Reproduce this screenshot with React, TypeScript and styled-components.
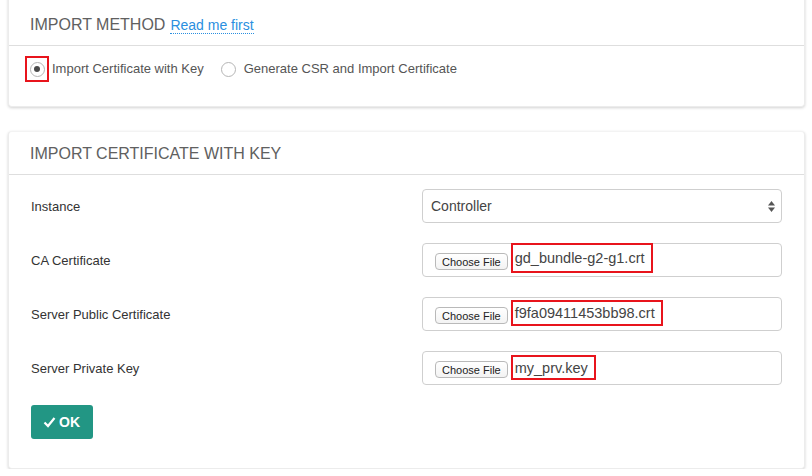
import React from "react";
import styled, { createGlobalStyle } from "styled-components";

const Global = createGlobalStyle`
  html, body { margin: 0; padding: 0; background: #fff; }
  body { font-family: "Liberation Sans", Arial, Helvetica, sans-serif; color: #333; overflow: hidden; }
`;

const Page = styled.div`
  display: flex;
  flex-direction: column;
  gap: 24px;
  padding: 0 7px 0 8px;
`;

const Card = styled.section<{ $shift?: number }>`
  background: #fff;
  border-radius: 4px;
  border: 1px solid #ececec;
  border-top-color: #f3f3f3;
  box-shadow: 0 1px 3px rgba(0, 0, 0, 0.18);
  margin-top: ${(p) => p.$shift ?? 0}px;
`;

const CardHeader = styled.header<{ $top: number; $bottom: number }>`
  display: flex;
  align-items: baseline;
  gap: 5px;
  padding: ${(p) => p.$top}px 21px ${(p) => p.$bottom}px;
  border-bottom: 1px solid #dedede;
  line-height: 20px;
`;

const Title = styled.h2`
  margin: 0;
  font-size: 16px;
  font-weight: normal;
  color: #606060;
  text-transform: uppercase;
`;

const HelpLink = styled.a`
  font-size: 14px;
  color: #2a8fe0;
  text-decoration: none;
  border-bottom: 1px dotted #2a8fe0;
  line-height: 15px;
`;

const RadioRow = styled.div`
  display: flex;
  align-items: center;
  gap: 13px;
  padding: 10px 16px 24px;
`;

const RadioOption = styled.label`
  display: flex;
  align-items: center;
  gap: 3px;
  font-size: 13px;
  color: #555;
  line-height: 20px;
`;

const RadioMark = styled.span<{ $marked?: boolean }>`
  display: flex;
  align-items: center;
  justify-content: center;
  width: 20px;
  height: 22px;
  border: 2px solid ${(p) => (p.$marked ? "#e8141c" : "transparent")};
`;

const RadioCircle = styled.span<{ $checked?: boolean }>`
  display: flex;
  align-items: center;
  justify-content: center;
  width: 13px;
  height: 13px;
  border-radius: 50%;
  border: 1px solid #b5b5b5;
  background: #fff;
  &::after {
    content: "";
    width: 6px;
    height: 6px;
    border-radius: 50%;
    background: ${(p) => (p.$checked ? "#4a4a4a" : "transparent")};
  }
`;

const FormBody = styled.div`
  display: flex;
  flex-direction: column;
  gap: 20px;
  padding: 14px 22px 29px;
`;

const FieldRow = styled.div`
  display: grid;
  grid-template-columns: 391px 1fr;
  align-items: center;
`;

const Label = styled.span`
  font-size: 13px;
  color: #333;
`;

const Control = styled.div`
  display: flex;
  align-items: center;
  height: 34px;
  box-sizing: border-box;
  border: 1px solid #cfcfcf;
  border-radius: 4px;
  background: #fff;
`;

const SelectBox = styled(Control)`
  justify-content: space-between;
  padding: 0 5px 0 8px;
  font-size: 14px;
  color: #444;
`;

const FileBox = styled(Control)`
  padding: 0 0 0 12px;
  gap: 3px;
  align-items: flex-start;
`;

const ChooseButton = styled.span`
  margin-top: 9px;
  display: inline-flex;
  align-items: center;
  height: 17px;
  padding: 0 6px;
  box-sizing: border-box;
  font-size: 11px;
  color: #222;
  border: 1px solid #b9b9b9;
  border-radius: 4px;
  background: linear-gradient(#fff, #f3f3f3);
`;

const FileName = styled.span<{ $top: number; $h: number }>`
  margin-top: ${(p) => p.$top}px;
  height: ${(p) => p.$h}px;
  box-sizing: border-box;
  display: inline-flex;
  align-items: center;
  padding: 0 6px 0 2px;
  border: 2px solid #e8141c;
  font-size: 14.5px;
  color: #444;
`;

const OkButton = styled.button`
  align-self: flex-start;
  display: inline-flex;
  align-items: center;
  gap: 3px;
  height: 34px;
  padding: 0 13px 0 12px;
  border: none;
  border-radius: 3px;
  background: #229684;
  color: #fff;
  font-family: "Liberation Sans", Arial, sans-serif;
  font-size: 14px;
  font-weight: bold;
`;

const Arrows = () => (
  <svg width="9" height="13" viewBox="0 0 9 13">
    <path d="M4.5 1 L8 5.5 H1 Z" fill="#555" />
    <path d="M4.5 12 L8 7.5 H1 Z" fill="#555" />
  </svg>
);

const Check = () => (
  <svg width="13" height="12" viewBox="0 0 13 12">
    <path d="M1.5 6.5 L5 10 L11.5 2" fill="none" stroke="#fff" strokeWidth="2.2" />
  </svg>
);

const files = [
  { label: "CA Certificate", name: "gd_bundle-g2-g1.crt", top: -1, h: 30 },
  { label: "Server Public Certificate", name: "f9fa09411453bb98.crt", top: 2, h: 26 },
  { label: "Server Private Key", name: "my_prv.key", top: 3, h: 25 },
];

export default function App() {
  return (
    <>
      <Global />
      <Page>
        <Card $shift={-10}>
          <CardHeader $top={24} $bottom={10}>
            <Title>Import Method</Title>
            <HelpLink href="#">Read me first</HelpLink>
          </CardHeader>
          <RadioRow>
            <RadioOption>
              <RadioMark $marked>
                <RadioCircle $checked />
              </RadioMark>
              Import Certificate with Key
            </RadioOption>
            <RadioOption>
              <RadioMark>
                <RadioCircle />
              </RadioMark>
              Generate CSR and Import Certificate
            </RadioOption>
          </RadioRow>
        </Card>
        <Card>
          <CardHeader $top={12} $bottom={10}>
            <Title>Import Certificate with Key</Title>
          </CardHeader>
          <FormBody>
            <FieldRow>
              <Label>Instance</Label>
              <SelectBox>
                Controller
                <Arrows />
              </SelectBox>
            </FieldRow>
            {files.map((f) => (
              <FieldRow key={f.label}>
                <Label>{f.label}</Label>
                <FileBox>
                  <ChooseButton>Choose File</ChooseButton>
                  <FileName $top={f.top} $h={f.h}>
                    {f.name}
                  </FileName>
                </FileBox>
              </FieldRow>
            ))}
            <OkButton>
              <Check />
              OK
            </OkButton>
          </FormBody>
        </Card>
      </Page>
    </>
  );
}
